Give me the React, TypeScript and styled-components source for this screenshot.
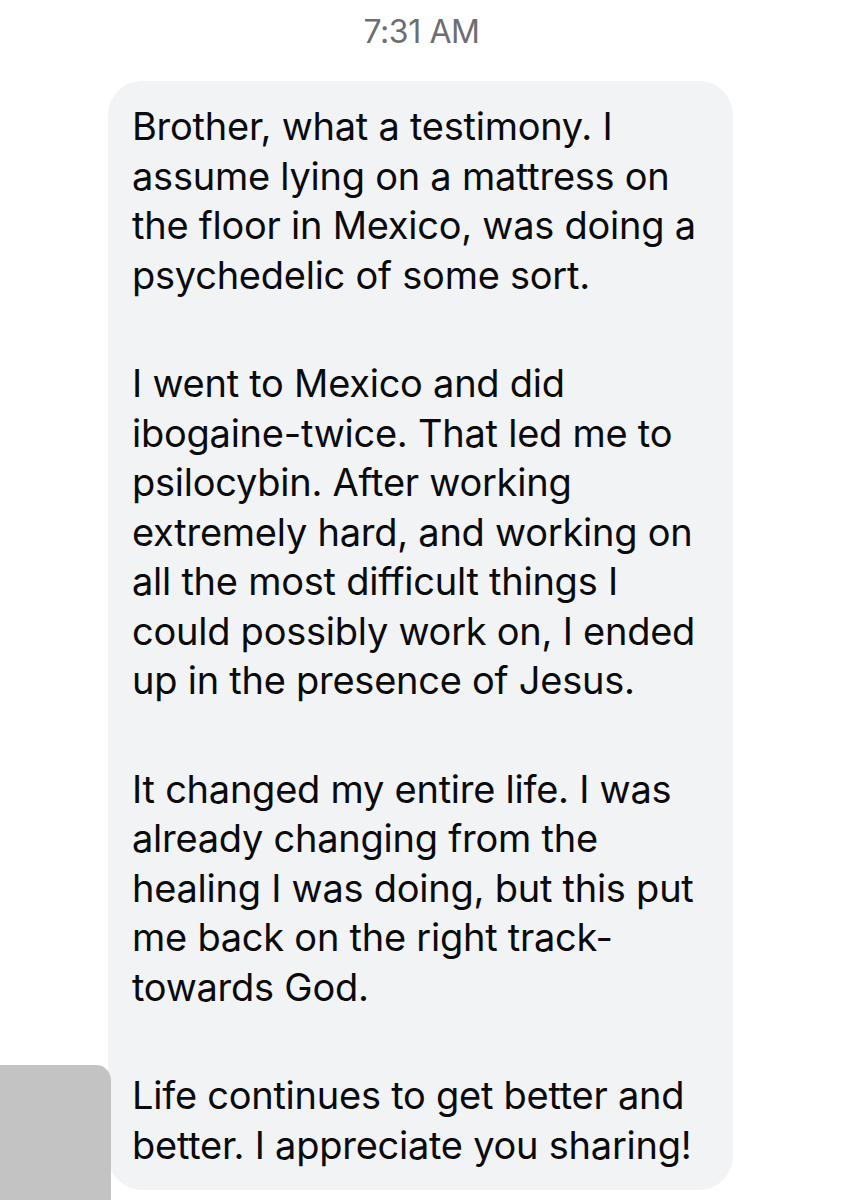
import React from 'react';
import styled, { createGlobalStyle } from 'styled-components';

const GlobalStyle = createGlobalStyle`
  html, body {
    margin: 0;
    padding: 0;
    background: #ffffff;
  }
  body {
    font-family: Inter, "Liberation Sans", Arial, sans-serif;
    -webkit-font-smoothing: antialiased;
  }
`;

const Screen = styled.div`
  position: relative;
  width: 843px;
  height: 1200px;
  overflow: hidden;
  background: #ffffff;
`;

const TimeStamp = styled.div`
  padding-top: 14px;
  height: 36px;
  line-height: 36px;
  font-size: 32px;
  color: #6d6d72;
  text-align: center;
  letter-spacing: -0.4px;
`;

const Thread = styled.div`
  display: flex;
  flex-direction: column;
  align-items: flex-start;
  padding-left: 108px;
  margin-top: 31px;
`;

const Bubble = styled.div`
  width: 625px;
  box-sizing: border-box;
  padding: 21px 24px 20px 24px;
  background: #f2f3f5;
  border-radius: 34px;
  color: #0b0b0d;
`;

const Paragraph = styled.div`
  & + & {
    margin-top: 59px;
  }
`;

const Line = styled.div`
  font-size: 38px;
  line-height: 49.5px;
  white-space: nowrap;
  letter-spacing: -0.25px;
`;

// blurred-out avatar in the lower left corner
const Redaction = styled.div`
  position: absolute;
  left: 0;
  top: 1065px;
  width: 111px;
  height: 160px;
  background: #c3c3c3;
  border-top-right-radius: 15px;
`;

const paragraphs: string[][] = [
  [
    'Brother, what a testimony. I',
    'assume lying on a mattress on',
    'the floor in Mexico, was doing a',
    'psychedelic of some sort.',
  ],
  [
    'I went to Mexico and did',
    'ibogaine-twice. That led me to',
    'psilocybin. After working',
    'extremely hard, and working on',
    'all the most difficult things I',
    'could possibly work on, I ended',
    'up in the presence of Jesus.',
  ],
  [
    'It changed my entire life. I was',
    'already changing from the',
    'healing I was doing, but this put',
    'me back on the right track-',
    'towards God.',
  ],
  [
    'Life continues to get better and',
    'better. I appreciate you sharing!',
  ],
];

const App = () => {
  return (
    <Screen>
      <GlobalStyle />
      <TimeStamp>7:31 AM</TimeStamp>
      <Thread>
        <Bubble>
          {paragraphs.map((lines, i) => (
            <Paragraph key={i}>
              {lines.map((l, j) => (
                <Line key={j}>{l}</Line>
              ))}
            </Paragraph>
          ))}
        </Bubble>
      </Thread>
      <Redaction />
    </Screen>
  );
};

export default App;
